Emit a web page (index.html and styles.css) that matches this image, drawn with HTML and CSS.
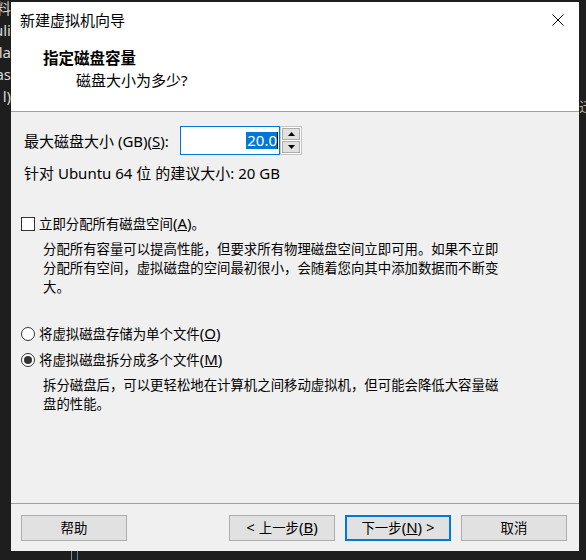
FILE: index.html
```html
<!DOCTYPE html>
<html lang="zh-CN">
<head>
<meta charset="utf-8">
<title>新建虚拟机向导</title>
<link rel="stylesheet" href="styles.css">
</head>
<body>
<div class="desk">
  <div class="bgwin">
    <div class="bgline">资料</div>
    <div class="bgline">uli</div>
    <div class="bgline">ila</div>
    <div class="bgline">ras</div>
    <div class="bgline">l)</div>
  </div>
  <div class="rglyph">迁</div>
  <div class="taskline"></div>

  <div class="dialog">
    <div class="titlebar">
      <span class="title">新建虚拟机向导</span>
      <svg class="close" width="12" height="12" viewBox="0 0 12 12"><path d="M0.5 0.5 L11.5 11.5 M11.5 0.5 L0.5 11.5" stroke="#000" stroke-width="1" fill="none"/></svg>
    </div>
    <div class="header">
      <div class="h-main">指定磁盘容量</div>
      <div class="h-sub">磁盘大小为多少?</div>
    </div>
    <div class="body">
      <div class="size-row">
        <span class="size-label">最大磁盘大小<span class="en"> (GB)(<u>S</u>):</span></span>
        <div class="spin-input"><span class="sel en">20.0</span><span class="caret"></span></div>
        <div class="spin-btns">
          <div class="sb"><svg width="7" height="4" viewBox="0 0 7 4"><path d="M3.5 0 L7 4 L0 4 Z" fill="#000"/></svg></div>
          <div class="sb"><svg width="7" height="4" viewBox="0 0 7 4"><path d="M0 0 L7 0 L3.5 4 Z" fill="#000"/></svg></div>
        </div>
      </div>
      <div class="hint">针对<span class="en"> Ubuntu 64 </span>位<span class="en"> </span>的建议大小<span class="en">: 20 GB</span></div>
      <div class="check-row">
        <span class="box"></span>
        <span>立即分配所有磁盘空间<span class="en">(<u>A</u>)</span>。</span>
      </div>
      <p class="desc">分配所有容量可以提高性能，但要求所有物理磁盘空间立即可用。如果不立即分配所有空间，虚拟磁盘的空间最初很小，会随着您向其中添加数据而不断变大。</p>
      <div class="radio-row first">
        <span class="radio"></span>
        <span>将虚拟磁盘存储为单个文件<span class="en">(<u>O</u>)</span></span>
      </div>
      <div class="radio-row">
        <span class="radio on"></span>
        <span>将虚拟磁盘拆分成多个文件<span class="en">(<u>M</u>)</span></span>
      </div>
      <p class="desc">拆分磁盘后，可以更轻松地在计算机之间移动虚拟机，但可能会降低大容量磁盘的性能。</p>
    </div>
    <div class="footer">
      <button class="btn">帮助</button>
      <div class="spacer"></div>
      <button class="btn"><span class="en">&lt; </span>上一步<span class="en">(<u>B</u>)</span></button>
      <button class="btn default">下一步<span class="en">(<u>N</u>) &gt;</span></button>
      <button class="btn">取消</button>
    </div>
  </div>
</div>
</body>
</html>
```

FILE: styles.css
```css
* { box-sizing: border-box; }

html, body {
  margin: 0;
  padding: 0;
}

body {
  width: 586px;
  height: 560px;
  overflow: hidden;
  background: #1e1e1e;
  font-family: "Noto Sans", "Noto Sans CJK SC", sans-serif;
  font-size: 13.4px;
  color: #000;
}

.en {
  font-size: 15px;
  line-height: 1;
}

.desk {
  position: relative;
  width: 586px;
  height: 560px;
  background: #1e1e1e;
}

.bgwin {
  position: absolute;
  left: 0;
  top: -3px;
  width: 11px;
  overflow: hidden;
  display: flex;
  flex-direction: column;
  color: #d8d8d8;
  font-size: 15px;
  line-height: 22px;
}

.bgline {
  display: flex;
  justify-content: flex-end;
  white-space: nowrap;
}

.rglyph {
  position: absolute;
  left: 579px;
  top: 99px;
  color: #c8b890;
  font-size: 14px;
  line-height: 16px;
}

.taskline {
  position: absolute;
  left: 71px;
  top: 551px;
  width: 7px;
  height: 9px;
  border-left: 1px solid #8a8a8a;
  border-right: 1px solid #5f7f9f;
}

.dialog {
  position: absolute;
  left: 11px;
  top: 2px;
  width: 568px;
  height: 549px;
  background: #f0f0f0;
  display: flex;
  flex-direction: column;
}

.titlebar {
  height: 36px;
  background: #fff;
  display: flex;
  align-items: center;
  padding: 0 15px 0 9px;
}

.title {
  font-size: 15px;
  line-height: 20px;
  flex: 1;
}

.close {
  display: block;
}

.header {
  height: 74px;
  background: #fff;
  border-bottom: 1px solid #a0a0a0;
  padding-top: 10px;
}

.h-main {
  font-weight: bold;
  font-size: 15.5px;
  line-height: 20px;
  padding-left: 32px;
}

.h-sub {
  font-size: 15px;
  line-height: 20px;
  margin-top: 2px;
  padding-left: 65px;
}

.body {
  flex: 1;
  padding: 14px 0 0 10px;
}

.size-row {
  display: flex;
  align-items: center;
  height: 29px;
  padding-left: 3px;
}

.size-label {
  width: 156px;
  font-size: 15px;
  line-height: 20px;
  white-space: nowrap;
}

.spin-input {
  width: 100px;
  height: 29px;
  border: 1px solid #0078d7;
  background: #fff;
  display: flex;
  justify-content: flex-end;
  align-items: center;
  padding-right: 1px;
}

.sel {
  background: #0078d7;
  color: #fff;
  line-height: 17px;
  padding-left: 1px;
}

.caret {
  width: 1px;
  height: 17px;
  background: #000;
}

.spin-btns {
  width: 22px;
  height: 29px;
  border: 1px solid #c4c4c4;
  background: #fff;
  padding: 1px;
  display: flex;
  flex-direction: column;
  gap: 1px;
}

.sb {
  flex: 1;
  background: #e1e1e1;
  border: 1px solid #adadad;
  display: flex;
  align-items: center;
  justify-content: center;
}

.sb svg { display: block; }

.hint {
  margin-top: 8px;
  padding-left: 3px;
  font-size: 15px;
  line-height: 20px;
  white-space: nowrap;
}

.check-row {
  margin-top: 31px;
  display: flex;
  align-items: center;
  height: 20px;
  line-height: 20px;
}

.box {
  width: 14px;
  height: 14px;
  border: 1px solid #333;
  background: #fff;
  margin-right: 4px;
  flex: none;
}

.desc {
  margin: 6px 0 0 22px;
  width: 462px;
  line-height: 19px;
}

.radio-row {
  margin-top: 6px;
  display: flex;
  align-items: center;
  height: 20px;
  line-height: 20px;
}

.radio-row.first {
  margin-top: 27px;
}

.radio {
  width: 14px;
  height: 14px;
  border: 1px solid #333;
  border-radius: 50%;
  background: #fff;
  margin-right: 4px;
  flex: none;
  display: flex;
  align-items: center;
  justify-content: center;
}

.radio.on::after {
  content: "";
  width: 8px;
  height: 8px;
  border-radius: 50%;
  background: #333;
}

.footer {
  height: 48px;
  border-top: 1px solid #a0a0a0;
  padding: 11px 12px 10px 10px;
  display: flex;
  gap: 10px;
}

.spacer {
  flex: 1;
}

.btn {
  width: 106px;
  height: 26px;
  border: 1px solid #adadad;
  background: #e1e1e1;
  font-family: inherit;
  font-size: 13.4px;
  line-height: 20px;
  color: #000;
  padding: 0;
  margin: 0;
  white-space: nowrap;
}

.btn.default {
  border: 2px solid #0078d7;
}
```
